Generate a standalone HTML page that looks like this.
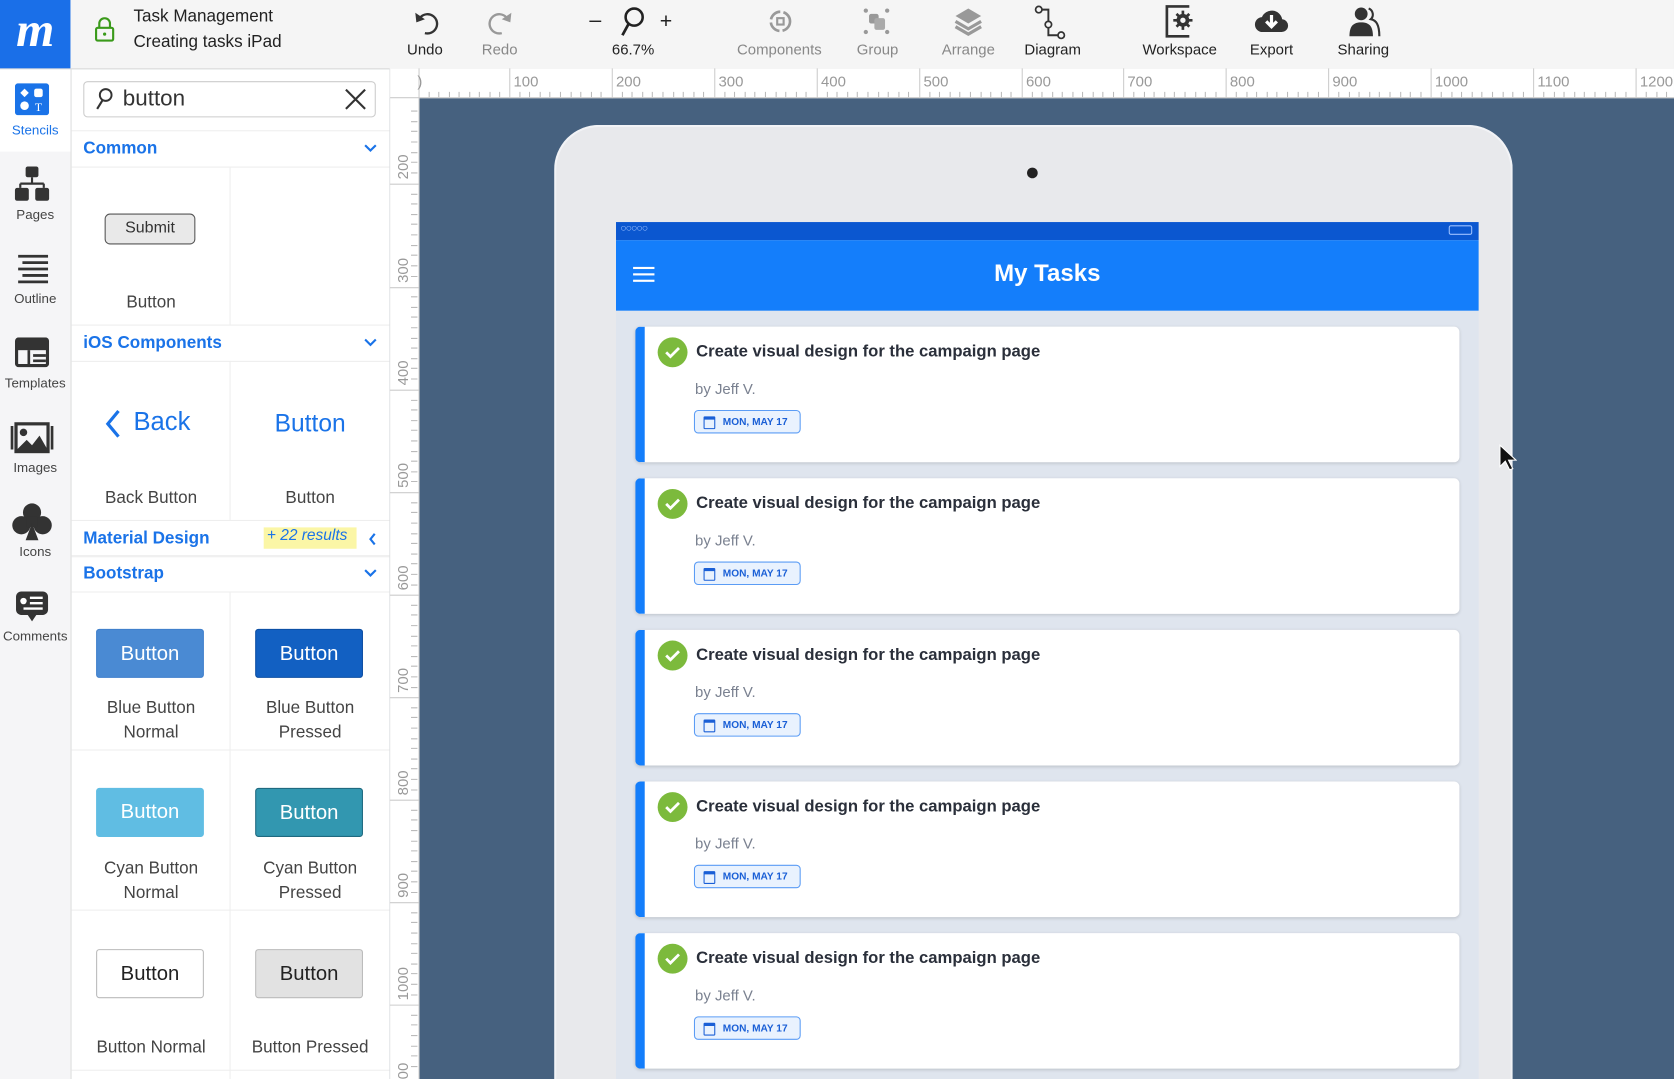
<!DOCTYPE html>
<html><head><meta charset="utf-8"><style>
html,body{margin:0;padding:0;width:1674px;height:1079px;overflow:hidden;background:#46617f;}
#r{position:absolute;left:0;top:0;width:1568px;height:1011px;transform:scale(1.06760);transform-origin:0 0;font-family:"Liberation Sans",sans-serif;overflow:hidden;background:#46617f}
.a{position:absolute}
.tb{left:0;top:0;width:1568px;height:64px;background:#f5f5f5;border-bottom:1px solid #d8d8d8}
.tl{position:absolute;font-size:14px;color:#222;text-align:center;top:38px}
.g{color:#888}
.nav{left:0;top:65px;width:66px;height:946px;background:#f5f5f7;border-right:1px solid #e0e0e0}
.nl{position:absolute;width:66px;text-align:center;font-size:12.5px;color:#444}
.sp{left:67px;top:65px;width:298px;height:946px;background:#fff}
.hd{position:absolute;left:0;width:298px;height:33px;border-bottom:1px solid #eee;border-top:1px solid #eee;color:#1a73e8;font-weight:bold;font-size:16px;line-height:33px;text-indent:11px}
.cv{position:absolute;right:12px;top:12px;width:12px;height:8px}
.lb{position:absolute;width:149px;text-align:center;font-size:16px;color:#444;line-height:23px}
.bt{position:absolute;width:101px;height:46px;border-radius:3px;font-size:19px;line-height:46px;text-align:center;color:#fff;box-sizing:border-box}
.card{position:absolute;left:595px;width:772px;height:127px;background:#fff;border-radius:5px;border-left:9px solid #147efb;box-sizing:border-box;box-shadow:0 1px 3px rgba(0,0,0,.15)}
.ck{position:absolute;left:12px;top:10px;width:28px;height:28px;border-radius:50%;background:#7cba3c}
.ttl{position:absolute;left:48px;top:15px;font-weight:bold;font-size:15.6px;color:#2a2f3a}
.by{position:absolute;left:47px;top:50px;font-size:14px;color:#7a8190}
.dt{position:absolute;left:46px;top:78px;width:100px;height:22px;border:1.5px solid #5b9cf5;background:#e9f2fe;border-radius:4px;font-size:9.5px;font-weight:bold;color:#1a5fd6;line-height:22px;box-sizing:border-box;padding-left:26px}
.dt i{position:absolute;left:8px;top:5px;width:9px;height:8px;border:1.5px solid #1a5fd6;border-top-width:3px;border-radius:1px}
</style></head><body><div id="r">

<div class="a tb"></div>
<div class="a" style="left:0;top:0;width:66px;height:64px;background:#1a6fe8;color:#fff;font-family:'Liberation Serif',serif;font-style:italic;font-weight:bold;font-size:46px;text-align:center;line-height:56px">m</div>
<svg class="a" style="left:88px;top:16px" width="20" height="24" viewBox="0 0 20 24"><path d="M5 10V6a5 5 0 0 1 10 0v4" fill="none" stroke="#3a9a1a" stroke-width="2"/><rect x="2" y="10" width="16" height="12" rx="1.5" fill="none" stroke="#3a9a1a" stroke-width="2"/><circle cx="10" cy="16" r="1.5" fill="#3a9a1a"/></svg>
<div class="a" style="left:125px;top:7px;font-size:16px;color:#222">Task Management</div>
<div class="a" style="left:125px;top:31px;font-size:16px;color:#222">Creating tasks iPad</div>
<svg class="a" style="left:385px;top:8px" width="28" height="26" viewBox="0 0 28 26"><path d="M9 8a9 9 0 1 1 4 15" fill="none" stroke="#333" stroke-width="2.2"/><path d="M4 4l1 9 8-3z" fill="#333"/></svg>
<div class="tl" style="left:378px;width:40px">Undo</div>
<svg class="a" style="left:455px;top:8px" width="28" height="26" viewBox="0 0 28 26"><path d="M19 8a9 9 0 1 0-4 15" fill="none" stroke="#999" stroke-width="2.2"/><path d="M24 4l-1 9-8-3z" fill="#999"/></svg>
<div class="tl g" style="left:448px;width:40px">Redo</div>
<div class="a" style="left:552px;top:8px;font-size:20px;color:#222">–</div>
<svg class="a" style="left:578px;top:5px" width="28" height="30" viewBox="0 0 28 30"><circle cx="16" cy="11" r="8" fill="none" stroke="#222" stroke-width="2.4"/><path d="M11 17L5 28" stroke="#222" stroke-width="2.6"/></svg>
<div class="a" style="left:618px;top:9px;font-size:20px;color:#222">+</div>
<div class="tl" style="left:563px;width:60px">66.7%</div>
<svg class="a" style="left:716px;top:7px" width="30" height="26" viewBox="0 0 30 26"><circle cx="15" cy="13" r="9" fill="none" stroke="#999" stroke-width="2.5" stroke-dasharray="12 3"/><rect x="12" y="10" width="6" height="6" fill="none" stroke="#999" stroke-width="2"/></svg>
<div class="tl g" style="left:680px;width:100px">Components</div>
<svg class="a" style="left:807px;top:6px" width="28" height="28" viewBox="0 0 28 28"><circle cx="4" cy="4" r="2" fill="#999"/><circle cx="24" cy="4" r="2" fill="#999"/><circle cx="4" cy="24" r="2" fill="#999"/><circle cx="24" cy="24" r="2" fill="#999"/><rect x="7" y="7" width="9" height="9" rx="2" fill="#999"/><rect x="12" y="11" width="10" height="11" rx="2" fill="#aaa"/></svg>
<div class="tl g" style="left:792px;width:60px">Group</div>
<svg class="a" style="left:893px;top:6px" width="28" height="30" viewBox="0 0 28 30"><path d="M14 2l12 7-12 7-12-7z" fill="#999"/><path d="M2 14l12 7 12-7M2 19l12 7 12-7" fill="none" stroke="#999" stroke-width="3"/></svg>
<div class="tl g" style="left:872px;width:70px">Arrange</div>
<svg class="a" style="left:968px;top:3px" width="34" height="34" viewBox="0 0 34 34"><circle cx="5" cy="6" r="3" fill="none" stroke="#333" stroke-width="1.6"/><circle cx="14" cy="20" r="3" fill="none" stroke="#333" stroke-width="1.6"/><circle cx="26" cy="30" r="3" fill="none" stroke="#333" stroke-width="1.6"/><path d="M8 6h6v11M14 23v7h9" fill="none" stroke="#333" stroke-width="1.8"/></svg>
<div class="tl" style="left:950px;width:72px">Diagram</div>
<svg class="a" style="left:1088px;top:3px" width="34" height="34" viewBox="0 0 34 34"><path d="M26 3H5v28h21" fill="none" stroke="#333" stroke-width="2.5"/><circle cx="20" cy="16" r="6" fill="#333"/><path d="M20 7v18M11 16h18M14 10l12 12M26 10L14 22" stroke="#333" stroke-width="2.5"/><circle cx="20" cy="16" r="2.5" fill="#f5f5f5"/></svg>
<div class="tl" style="left:1060px;width:90px">Workspace</div>
<svg class="a" style="left:1174px;top:6px" width="34" height="28" viewBox="0 0 34 28"><path d="M9 24a7 7 0 0 1-1-14 10 10 0 0 1 19 2 6 6 0 0 1-1 12z" fill="#333"/><path d="M17 8v10M12 14l5 5 5-5" stroke="#fff" stroke-width="3" fill="none"/></svg>
<div class="tl" style="left:1160px;width:62px">Export</div>
<svg class="a" style="left:1262px;top:4px" width="32" height="32" viewBox="0 0 32 32"><circle cx="13" cy="9" r="6" fill="#333"/><path d="M2 30c0-10 4-13 11-13s11 3 11 13z" fill="#333"/><path d="M20 4a6 6 0 0 1 2 10c5 1 8 5 8 16" fill="none" stroke="#333" stroke-width="2"/></svg>
<div class="tl" style="left:1240px;width:74px">Sharing</div>

<div class="a nav"></div>
<div class="a" style="left:0;top:65px;width:66px;height:77px;background:#fff"></div>
<svg class="a" style="left:14px;top:78px" width="32" height="30" viewBox="0 0 32 30"><rect width="32" height="30" rx="3" fill="#1a73e8"/><path d="M9 5l4 4-4 4-4-4z" fill="#fff"/><rect x="18" y="5" width="8" height="8" rx="2" fill="#fff"/><circle cx="9" cy="21" r="4" fill="#fff"/><text x="22" y="26" font-size="11" fill="#fff" text-anchor="middle" font-family="Liberation Serif">T</text></svg>
<div class="nl" style="top:115px;color:#1a73e8">Stencils</div>
<svg class="a" style="left:13px;top:155px" width="34" height="34" viewBox="0 0 34 34"><rect x="11" y="1" width="12" height="10" rx="2" fill="#333"/><path d="M17 11v6M6 17h22M6 17v4M28 17v4" stroke="#333" stroke-width="2" fill="none"/><rect x="1" y="21" width="13" height="12" rx="2" fill="#333"/><rect x="20" y="21" width="13" height="12" rx="2" fill="#333"/></svg>
<div class="nl" style="top:194px">Pages</div>
<svg class="a" style="left:14px;top:238px" width="32" height="30" viewBox="0 0 32 30"><path d="M3 2h28M7 8h24M3 14h28M7 20h24M3 26h28" stroke="#333" stroke-width="2.6"/></svg>
<div class="nl" style="top:273px">Outline</div>
<svg class="a" style="left:14px;top:316px" width="32" height="28" viewBox="0 0 32 28"><rect x="1.5" y="1.5" width="29" height="25" rx="2" fill="none" stroke="#333" stroke-width="3"/><rect x="1" y="1" width="30" height="11" fill="#333"/><path d="M13 12v15M17 17h12M17 22h12" stroke="#333" stroke-width="2.5"/></svg>
<div class="nl" style="top:352px">Templates</div>
<svg class="a" style="left:10px;top:395px" width="40" height="30" viewBox="0 0 40 30"><rect x="5" y="2" width="30" height="26" fill="none" stroke="#333" stroke-width="3"/><path d="M1 4v22M39 4v22" stroke="#333" stroke-width="3"/><circle cx="12" cy="10" r="3.5" fill="#333"/><path d="M5 27l10-10 5 5 7-9 8 14z" fill="#333"/></svg>
<div class="nl" style="top:431px">Images</div>
<svg class="a" style="left:11px;top:470px" width="38" height="38" viewBox="0 0 38 38"><circle cx="19" cy="10" r="8.5" fill="#333"/><circle cx="9" cy="22" r="8.5" fill="#333"/><circle cx="29" cy="22" r="8.5" fill="#333"/><rect x="14" y="14" width="10" height="10" fill="#333"/><path d="M19 20l-6 16h12z" fill="#333"/></svg>
<div class="nl" style="top:510px">Icons</div>
<svg class="a" style="left:14px;top:553px" width="32" height="32" viewBox="0 0 32 32"><rect x="1" y="1" width="30" height="22" rx="5" fill="#333"/><path d="M12 23l4 6 4-6z" fill="#333"/><circle cx="8" cy="10" r="3" fill="#fff"/><path d="M14 7h12M14 12h12M8 17h18" stroke="#fff" stroke-width="2.2"/></svg>
<div class="nl" style="top:589px">Comments</div>

<div class="a sp">
 <div class="a" style="left:11px;top:11px;width:274px;height:34px;border:1px solid #ccc;border-radius:4px;box-sizing:border-box"></div>
 <svg class="a" style="left:22px;top:17px" width="18" height="22" viewBox="0 0 18 22"><circle cx="10" cy="7" r="5.5" fill="none" stroke="#333" stroke-width="1.8"/><path d="M7 12L2 20" stroke="#333" stroke-width="2"/></svg>
 <div class="a" style="left:48px;top:16px;font-size:21px;color:#333">button</div>
 <svg class="a" style="left:255px;top:17px" width="22" height="22" viewBox="0 0 22 22"><path d="M2 2l18 18M20 2L2 20" stroke="#333" stroke-width="2"/></svg>

 <div class="hd" style="top:57px">Common<svg class="cv" viewBox="0 0 12 8"><path d="M1 1l5 5 5-5" fill="none" stroke="#1a73e8" stroke-width="2"/></svg></div>
 <div class="a" style="left:148px;top:91px;width:1px;height:149px;background:#eee"></div>
 <div class="a" style="left:31px;top:135px;width:85px;height:29px;border:1.5px solid #555;border-radius:5px;background:#e9e9e9;box-sizing:border-box;font-size:15px;text-align:center;line-height:26px;color:#333">Submit</div>
 <div class="lb" style="left:0;top:207px">Button</div>

 <div class="hd" style="top:239px">iOS Components<svg class="cv" viewBox="0 0 12 8"><path d="M1 1l5 5 5-5" fill="none" stroke="#1a73e8" stroke-width="2"/></svg></div>
 <div class="a" style="left:148px;top:273px;width:1px;height:149px;background:#eee"></div>
 <svg class="a" style="left:31px;top:318px" width="16" height="28" viewBox="0 0 16 28"><path d="M13 2L3 14l10 12" fill="none" stroke="#1a73e8" stroke-width="3"/></svg>
 <div class="a" style="left:58px;top:317px;font-size:24px;color:#1a73e8">Back</div>
 <div class="a" style="left:149px;top:318px;width:149px;text-align:center;font-size:23px;color:#1a73e8">Button</div>
 <div class="lb" style="left:0;top:390px">Back Button</div>
 <div class="lb" style="left:149px;top:390px">Button</div>

 <div class="hd" style="top:422px">Material Design<span class="a" style="left:180px;top:6px;height:20px;width:87px;background:#fbf6a6"></span><span class="a" style="left:183px;top:0;font-weight:normal;font-style:italic;font-size:14.5px;text-indent:0;line-height:29px">+ 22 results</span><svg class="a" style="right:12px;top:11px" width="8" height="12" viewBox="0 0 8 12"><path d="M6 1L2 6l4 5" fill="none" stroke="#1a73e8" stroke-width="2"/></svg></div>
 <div class="hd" style="top:455px">Bootstrap<svg class="cv" viewBox="0 0 12 8"><path d="M1 1l5 5 5-5" fill="none" stroke="#1a73e8" stroke-width="2"/></svg></div>

 <div class="a" style="left:148px;top:489px;width:1px;height:460px;background:#eee"></div>
 <div class="a" style="left:0;top:637px;width:298px;height:1px;background:#eee"></div>
 <div class="a" style="left:0;top:787px;width:298px;height:1px;background:#eee"></div>
 <div class="a" style="left:0;top:937px;width:298px;height:1px;background:#eee"></div>
 <div class="bt" style="left:23px;top:524px;background:#4a8ad3;border:1px solid #3f7fcc">Button</div>
 <div class="bt" style="left:172px;top:524px;background:#1260c2;border:1px solid #0c4ea3">Button</div>
 <div class="lb" style="left:0;top:587px">Blue Button<br>Normal</div>
 <div class="lb" style="left:149px;top:587px">Blue Button<br>Pressed</div>
 <div class="bt" style="left:23px;top:673px;background:#60bde3">Button</div>
 <div class="bt" style="left:172px;top:673px;background:#3297b0;border:1.5px solid #1f6a80">Button</div>
 <div class="lb" style="left:0;top:737px">Cyan Button<br>Normal</div>
 <div class="lb" style="left:149px;top:737px">Cyan Button<br>Pressed</div>
 <div class="bt" style="left:23px;top:824px;background:#fff;border:1px solid #bbb;color:#222">Button</div>
 <div class="bt" style="left:172px;top:824px;background:#e2e2e2;border:1px solid #bbb;color:#222">Button</div>
 <div class="lb" style="left:0;top:905px">Button Normal</div>
 <div class="lb" style="left:149px;top:905px">Button Pressed</div>
</div>

<svg class="a" style="left:365px;top:64px" width="1203" height="947">
 <rect x="0" y="0" width="1203" height="28" fill="#fff"/>
 <rect x="0" y="0" width="27" height="947" fill="#fff"/>
 <line x1="0" y1="27.5" x2="1203" y2="27.5" stroke="#ccc"/>
 <line x1="27.5" y1="0" x2="27.5" y2="947" stroke="#ccc"/>
 <line x1="0" y1="0.5" x2="0" y2="947" stroke="#ddd"/>
 <g font-size="14" fill="#999" font-family="Liberation Sans">
 <text x="26" y="17">)</text>
 <text x="116" y="17">100</text><text x="212" y="17">200</text><text x="308" y="17">300</text><text x="404" y="17">400</text><text x="500" y="17">500</text><text x="596" y="17">600</text><text x="691" y="17">700</text><text x="787" y="17">800</text><text x="883" y="17">900</text><text x="979" y="17">1000</text><text x="1075" y="17">1100</text><text x="1171" y="17">1200</text>
 </g>
 <g stroke="#ccc">
 <line x1="112.5" y1="0" x2="112.5" y2="28"/><line x1="208.5" y1="0" x2="208.5" y2="28"/><line x1="304.5" y1="0" x2="304.5" y2="28"/><line x1="400.5" y1="0" x2="400.5" y2="28"/><line x1="496.5" y1="0" x2="496.5" y2="28"/><line x1="592.5" y1="0" x2="592.5" y2="28"/><line x1="687.5" y1="0" x2="687.5" y2="28"/><line x1="783.5" y1="0" x2="783.5" y2="28"/><line x1="879.5" y1="0" x2="879.5" y2="28"/><line x1="975.5" y1="0" x2="975.5" y2="28"/><line x1="1071.5" y1="0" x2="1071.5" y2="28"/><line x1="1167.5" y1="0" x2="1167.5" y2="28"/>
 </g>
 <path stroke="#bbb" d="M37 22v5M46 22v5M56 22v5M65 22v5M75 22v5M84 22v5M94 22v5M103 22v5M122 22v5M131 22v5M141 22v5M150 22v5M160 22v5M170 22v5M179 22v5M189 22v5M198 22v5M218 22v5M227 22v5M237 22v5M246 22v5M256 22v5M266 22v5M275 22v5M285 22v5M294 22v5M314 22v5M323 22v5M333 22v5M342 22v5M352 22v5M362 22v5M371 22v5M381 22v5M390 22v5M410 22v5M419 22v5M429 22v5M438 22v5M448 22v5M458 22v5M467 22v5M477 22v5M486 22v5M506 22v5M515 22v5M525 22v5M534 22v5M544 22v5M554 22v5M563 22v5M573 22v5M582 22v5M602 22v5M611 22v5M621 22v5M630 22v5M640 22v5M649 22v5M659 22v5M668 22v5M678 22v5M697 22v5M707 22v5M716 22v5M726 22v5M735 22v5M745 22v5M755 22v5M764 22v5M774 22v5M793 22v5M803 22v5M812 22v5M822 22v5M831 22v5M841 22v5M851 22v5M860 22v5M870 22v5M889 22v5M899 22v5M908 22v5M918 22v5M927 22v5M937 22v5M947 22v5M956 22v5M966 22v5M985 22v5M995 22v5M1004 22v5M1014 22v5M1023 22v5M1033 22v5M1043 22v5M1052 22v5M1062 22v5M1081 22v5M1091 22v5M1100 22v5M1110 22v5M1119 22v5M1129 22v5M1139 22v5M1148 22v5M1158 22v5M1177 22v5M1187 22v5M1196 22v5"/>
 <g stroke="#ccc">
 <line x1="0" y1="108.5" x2="27" y2="108.5"/><line x1="0" y1="205.5" x2="27" y2="205.5"/><line x1="0" y1="301.5" x2="27" y2="301.5"/><line x1="0" y1="397.5" x2="27" y2="397.5"/><line x1="0" y1="493.5" x2="27" y2="493.5"/><line x1="0" y1="589.5" x2="27" y2="589.5"/><line x1="0" y1="685.5" x2="27" y2="685.5"/><line x1="0" y1="781.5" x2="27" y2="781.5"/><line x1="0" y1="877.5" x2="27" y2="877.5"/>
 </g>
 <g font-size="14" fill="#999" font-family="Liberation Sans">
 <text transform="translate(17,104) rotate(-90)">200</text>
 <text transform="translate(17,201) rotate(-90)">300</text>
 <text transform="translate(17,297) rotate(-90)">400</text>
 <text transform="translate(17,393) rotate(-90)">500</text>
 <text transform="translate(17,489) rotate(-90)">600</text>
 <text transform="translate(17,585) rotate(-90)">700</text>
 <text transform="translate(17,681) rotate(-90)">800</text>
 <text transform="translate(17,777) rotate(-90)">900</text>
 <text transform="translate(17,873) rotate(-90)">1000</text>
 <text transform="translate(17,947) rotate(-90)">00</text>
 </g>
 <path stroke="#bbb" d="M20 40h6M20 50h6M20 59h6M20 69h6M20 79h6M20 88h6M20 98h6M20 118h6M20 127h6M20 137h6M20 146h6M20 156h6M20 166h6M20 175h6M20 185h6M20 195h6M20 214h6M20 224h6M20 233h6M20 243h6M20 253h6M20 262h6M20 272h6M20 281h6M20 291h6M20 311h6M20 320h6M20 330h6M20 339h6M20 349h6M20 359h6M20 368h6M20 378h6M20 387h6M20 407h6M20 416h6M20 426h6M20 436h6M20 445h6M20 455h6M20 464h6M20 474h6M20 484h6M20 503h6M20 512h6M20 522h6M20 532h6M20 541h6M20 551h6M20 560h6M20 570h6M20 580h6M20 599h6M20 608h6M20 618h6M20 628h6M20 637h6M20 647h6M20 656h6M20 666h6M20 676h6M20 695h6M20 704h6M20 714h6M20 724h6M20 733h6M20 743h6M20 752h6M20 762h6M20 772h6M20 791h6M20 800h6M20 810h6M20 820h6M20 829h6M20 839h6M20 848h6M20 858h6M20 868h6M20 887h6M20 896h6M20 906h6M20 916h6M20 925h6M20 935h6"/>
</svg>

<div class="a" style="left:519px;top:117px;width:898px;height:894px;border-radius:42px 42px 0 0;background:#e8e9ec;border:2px solid #f2f3f6;border-bottom:none;box-sizing:border-box"></div>
<div class="a" style="left:962px;top:157px;width:10px;height:10px;border-radius:50%;background:#222"></div>
<div class="a" style="left:577px;top:208px;width:808px;height:803px;background:#dfe5ee"></div>
<div class="a" style="left:577px;top:208px;width:808px;height:17px;background:#0b57d0"></div>
<div class="a" style="left:581px;top:209px;font-size:10px;color:#9cc0ff;letter-spacing:-1px">○○○○○</div>
<div class="a" style="left:1357px;top:211px;width:20px;height:7px;border:1px solid #9cc0ff;border-radius:2px"></div>
<div class="a" style="left:577px;top:225px;width:808px;height:66px;background:#147efb"></div>
<div class="a" style="left:593px;top:250px;width:20px;height:2px;background:#fff;box-shadow:0 6px 0 #fff,0 12px 0 #fff"></div>
<div class="a" style="left:577px;top:243px;width:808px;text-align:center;color:#fff;font-weight:bold;font-size:22.5px">My Tasks</div>

<div class="card" style="top:306px"><div class="ck"><svg width="28" height="28"><path d="M8 14l4 4 8-8" fill="none" stroke="#fff" stroke-width="2.6"/></svg></div><div class="ttl">Create visual design for the campaign page</div><div class="by">by Jeff V.</div><div class="dt"><i></i>MON, MAY 17</div></div>
<div class="card" style="top:448px"><div class="ck"><svg width="28" height="28"><path d="M8 14l4 4 8-8" fill="none" stroke="#fff" stroke-width="2.6"/></svg></div><div class="ttl">Create visual design for the campaign page</div><div class="by">by Jeff V.</div><div class="dt"><i></i>MON, MAY 17</div></div>
<div class="card" style="top:590px"><div class="ck"><svg width="28" height="28"><path d="M8 14l4 4 8-8" fill="none" stroke="#fff" stroke-width="2.6"/></svg></div><div class="ttl">Create visual design for the campaign page</div><div class="by">by Jeff V.</div><div class="dt"><i></i>MON, MAY 17</div></div>
<div class="card" style="top:732px"><div class="ck"><svg width="28" height="28"><path d="M8 14l4 4 8-8" fill="none" stroke="#fff" stroke-width="2.6"/></svg></div><div class="ttl">Create visual design for the campaign page</div><div class="by">by Jeff V.</div><div class="dt"><i></i>MON, MAY 17</div></div>
<div class="card" style="top:874px"><div class="ck"><svg width="28" height="28"><path d="M8 14l4 4 8-8" fill="none" stroke="#fff" stroke-width="2.6"/></svg></div><div class="ttl">Create visual design for the campaign page</div><div class="by">by Jeff V.</div><div class="dt"><i></i>MON, MAY 17</div></div>

<svg class="a" style="left:1403px;top:416px" width="18" height="26" viewBox="0 0 18 26"><path d="M2 1v20l5-5 4 8 3-1-4-8h7z" fill="#111" stroke="#fff" stroke-width="1"/></svg>
</div></body></html>
